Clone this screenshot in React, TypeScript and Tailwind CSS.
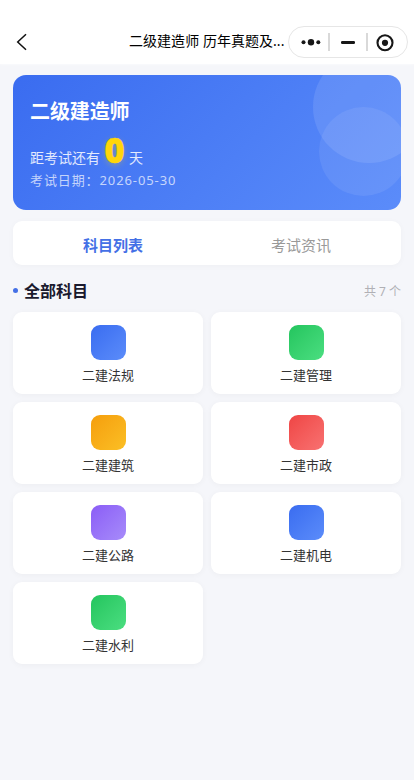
const subjects = [
  { name: '二建法规', color: 'from-[#3a6cf0] to-[#5b8cfa]' },
  { name: '二建管理', color: 'from-[#22c55e] to-[#4ade80]' },
  { name: '二建建筑', color: 'from-[#f59e0b] to-[#fbbf24]' },
  { name: '二建市政', color: 'from-[#ef4444] to-[#f87171]' },
  { name: '二建公路', color: 'from-[#8b5cf6] to-[#a78bfa]' },
  { name: '二建机电', color: 'from-[#3a6cf0] to-[#5b8cfa]' },
  { name: '二建水利', color: 'from-[#22c55e] to-[#4ade80]' },
]

function NavBar() {
  return (
    <header className="flex h-16 items-start bg-white pt-[26px] shadow-[0_0_3px_rgba(255,255,255,0.9)]">
      <div className="flex h-8 w-[129px] shrink-0 items-center pl-[15px]">
        <svg width="14" height="18" viewBox="0 0 14 18" fill="none" stroke="#111" strokeWidth="1.5">
          <path d="M11 1.2 2.7 9l8.3 7.8" />
        </svg>
      </div>
      <h1 className="h-8 w-[159px] shrink-0 whitespace-nowrap text-[14px] leading-[29px] tracking-[0.04px] text-black">
        二级建造师 历年真题及...
      </h1>
      <div className="flex h-8 w-[120px] shrink-0 items-center rounded-full border border-[#e6e6e6] bg-white">
        <svg width="118" height="30" viewBox="0 0 118 30" fill="#171717">
          <circle cx="14.5" cy="15.2" r="2" />
          <circle cx="22" cy="15.2" r="3.2" />
          <circle cx="29.3" cy="15.2" r="2" />
          <rect x="39" y="6" width="2" height="18" fill="#d9d9d9" />
          <rect x="52" y="14" width="14" height="3" rx="1.2" />
          <rect x="77" y="6" width="2" height="18" fill="#d9d9d9" />
          <circle cx="96" cy="15.8" r="7.5" fill="none" stroke="#171717" strokeWidth="2.1" />
          <circle cx="96" cy="15.8" r="3.1" />
        </svg>
      </div>
    </header>
  )
}

function Countdown() {
  return (
    <section className="relative h-[135px] overflow-hidden rounded-[13px] bg-linear-135 from-[#3a6cf0] to-[#5b8cfa] px-[17px] pt-[22px]">
      <div className="absolute -top-6 left-[300px] size-28 rounded-full bg-white/10" />
      <div className="absolute top-8 left-[306px] size-[89px] rounded-full bg-white/8" />
      <h2 className="text-[20px] leading-[29px] font-bold tracking-[-0.1px] text-white">二级建造师</h2>
      <div className="mt-[6px] flex h-9 items-baseline text-[14px] leading-9 text-white/85">
        <span>距考试还有</span>
        <span className="mx-[4px] inline-block w-[21px] text-center text-[35px] leading-9 font-black text-[#ffd60a] [-webkit-text-stroke:0.3px_#ffd60a] [text-shadow:0_2px_6px_rgba(255,214,10,0.3)]">
          0
        </span>
        <span>天</span>
      </div>
      <p className="mt-[2px] text-[13px] leading-5 tracking-[0.9px] text-white/70">考试日期：2026-05-30</p>
    </section>
  )
}

function SubjectCard({ name, color }: { name: string; color: string }) {
  return (
    <div className="flex h-[82px] flex-col items-center rounded-[9px] bg-white pt-[13px] shadow-[0_1px_6px_rgba(0,0,0,0.04)]">
      <div className={`size-[35px] rounded-[9px] bg-linear-135 ${color}`} />
      <span className="mt-[5px] text-[13px] leading-5 text-[#333]">{name}</span>
    </div>
  )
}

export default function App() {
  return (
    <div className="min-h-screen bg-[#f5f6fa] font-['Noto_Sans','Noto_Sans_CJK_SC',sans-serif]">
      <NavBar />
      <main className="px-[13px] pt-[11px]">
        <Countdown />

        {/* Tabs */}
        <div className="mt-[11px] grid h-11 grid-cols-2 items-center rounded-[9px] bg-white pt-1 text-center text-[15px] shadow-[0_1px_6px_rgba(0,0,0,0.03)]">
          <span className="pl-[6px] font-bold text-[#4470e6]">科目列表</span>
          <span className="pr-[6px] text-[#999]">考试资讯</span>
        </div>

        <div className="mt-[14px] flex h-6 items-center">
          <span className="mb-[2px] size-[5px] rounded-full bg-[#4470e6]" />
          <h3 className="ml-[6px] text-[16px] leading-6 font-bold text-[#1a1a2e]">全部科目</h3>
          <span className="mt-[2px] ml-auto text-[12px] text-[#b0b0b5]">共 7 个</span>
        </div>

        <div className="mt-[9px] grid grid-cols-2 gap-2">
          {subjects.map((s) => (
            <SubjectCard key={s.name} name={s.name} color={s.color} />
          ))}
        </div>
      </main>
    </div>
  )
}
